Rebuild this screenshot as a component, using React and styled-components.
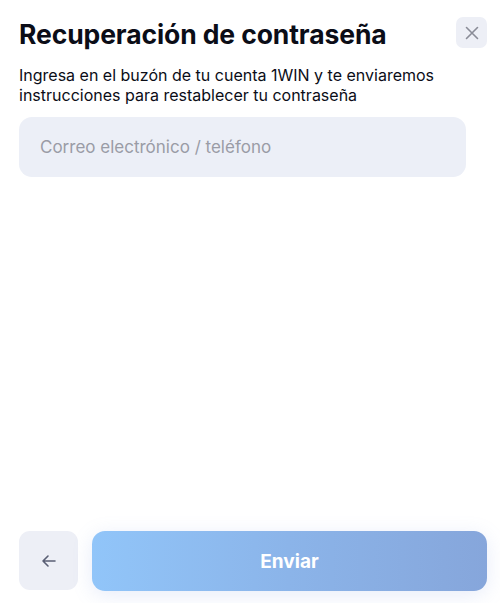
import React from "react";
import styled, { createGlobalStyle } from "styled-components";

const Global = createGlobalStyle`
  html, body { margin: 0; padding: 0; background: #ffffff; }
  body { font-family: Inter, "Noto Sans", "Liberation Sans", sans-serif; -webkit-font-smoothing: antialiased; }
  * { box-sizing: border-box; }
`;

const Page = styled.div`
  height: 603px;
  display: flex;
  flex-direction: column;
  padding: 17px 13px 12px 19px;
  background: #ffffff;
`;

const Header = styled.div`
  display: flex;
  justify-content: space-between;
  align-items: flex-start;
`;

const Title = styled.h1`
  margin: 0;
  padding-top: 1px;
  font-size: 26.5px;
  line-height: 32px;
  font-weight: 700;
  color: #0b0d17;
  letter-spacing: -0.1px;
`;

const IconButton = styled.button`
  width: ${(p) => p.size}px;
  height: ${(p) => p.size}px;
  border: none;
  border-radius: ${(p) => p.radius}px;
  background: #edeff6;
  display: flex;
  align-items: center;
  justify-content: center;
  padding: 0;
  flex-shrink: 0;
  cursor: pointer;
`;

const Description = styled.p`
  margin: 15px 0 0;
  font-size: 16px;
  line-height: 20px;
  color: #0b0d17;
  max-width: 450px;
`;

const Field = styled.input`
  margin-top: 12px;
  margin-right: 21px;
  height: 60px;
  border: none;
  border-radius: 13px;
  background: #eceff7;
  padding: 0 21px;
  font-family: inherit;
  font-size: 17px;
  color: #0b0d17;
  outline: none;
  &::placeholder { color: #9a9ca6; }
`;

const Spacer = styled.div`
  flex: 1;
`;

const Footer = styled.div`
  display: flex;
  gap: 14px;
  align-items: stretch;
  height: 60px;
`;

const Submit = styled.button`
  flex: 1;
  border: none;
  border-radius: 13px;
  background: linear-gradient(90deg, #91c5f9 0%, #8bb4e9 50%, #86a6db 100%);
  color: #ffffff;
  font-family: inherit;
  font-size: 19px;
  font-weight: 700;
  box-shadow: 0 4px 20px rgba(120, 150, 220, 0.18);
  cursor: pointer;
`;

const CloseIcon = () => (
  <svg width="16" height="16" viewBox="0 0 16 16" fill="none">
    <path d="M2.5 2.5 L13.5 13.5 M13.5 2.5 L2.5 13.5" stroke="#8a8c97" strokeWidth="1.6" strokeLinecap="round" />
  </svg>
);

const BackIcon = () => (
  <svg width="18" height="18" viewBox="0 0 18 18" fill="none">
    <path d="M15 9 H3 M8 4 L3 9 L8 14" stroke="#5a5f74" strokeWidth="1.6" strokeLinecap="round" strokeLinejoin="round" />
  </svg>
);

export default function App() {
  return (
    <>
      <Global />
      <Page>
        <Header>
          <Title>Recuperación de contraseña</Title>
          <IconButton size={31} radius={7} aria-label="Cerrar">
            <CloseIcon />
          </IconButton>
        </Header>
        <Description>
          Ingresa en el buzón de tu cuenta 1WIN y te enviaremos instrucciones para restablecer tu contraseña
        </Description>
        <Field placeholder="Correo electrónico / teléfono" />
        <Spacer />
        <Footer>
          <IconButton size={59} radius={11} aria-label="Atrás">
            <BackIcon />
          </IconButton>
          <Submit>Enviar</Submit>
        </Footer>
      </Page>
    </>
  );
}
